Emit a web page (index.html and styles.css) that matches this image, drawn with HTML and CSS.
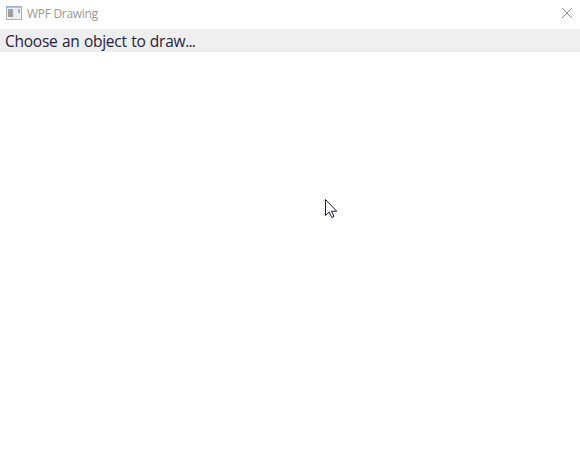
FILE: index.html
```html
<!DOCTYPE html>
<html lang="en">
<head>
<meta charset="utf-8">
<title>WPF Drawing</title>
<link rel="stylesheet" href="styles.css">
</head>
<body>
<div class="window">
  <header class="titlebar">
    <svg class="app-icon" width="16" height="14" viewBox="0 0 16 14" shape-rendering="crispEdges">
      <rect width="16" height="14" fill="#a4b1c6"/>
      <rect x="1" y="1" width="14" height="1" fill="#b9c2d0"/>
      <rect x="1" y="2" width="14" height="11" fill="#f1efec"/>
      <rect x="2" y="3" width="5" height="8" fill="#8fabc8"/>
      <rect x="2" y="5" width="4" height="6" fill="#b39a7c"/>
      <rect x="7" y="3" width="1" height="8" fill="#dce4ea"/>
      <rect x="12" y="3" width="2" height="4" fill="#94add0"/>
    </svg>
    <span class="title">WPF Drawing</span>
    <svg class="close" width="12" height="12" viewBox="0 0 12 12">
      <path d="M1 1L11 11M11 1L1 11" stroke="#92898a" stroke-width="1" fill="none"/>
    </svg>
  </header>
  <div class="menubar"><span class="prompt">Choose an object to draw<span class="dots">...</span></span></div>
  <main class="canvas">
    <svg class="cursor" width="14" height="21" viewBox="0 0 14 21">
      <path d="M1.5 1.5V17.5L5.2 14L7.8 19.5L10 18.5L7.6 13.2H12.7Z" fill="#fff" stroke="#211b35" stroke-width="1"/>
    </svg>
  </main>
</div>
</body>
</html>
```
FILE: styles.css
```css
* {
  box-sizing: border-box;
}

body {
  margin: 0;
  background: #fefefe;
  font-family: "Open Sans", "Noto Sans", sans-serif;
}

.window {
  display: flex;
  flex-direction: column;
  height: 470px;
  overflow: hidden;
}

.titlebar {
  display: flex;
  align-items: center;
  height: 29px;
  padding: 0 7px 3px 6px;
}

.app-icon {
  margin-right: 5px;
}

.title {
  color: #9c9993;
  font-size: 12px;
  line-height: 16px;
  letter-spacing: -0.3px;
  padding-top: 1px;
}

.close {
  margin-left: auto;
}

.menubar {
  height: 23px;
  padding-left: 5px;
  background: #eee;
  color: #28233b;
  font-size: 15.5px;
  line-height: 24px;
  letter-spacing: -0.25px;
  word-spacing: 0.6px;
  white-space: nowrap;
}

.dots {
  letter-spacing: -0.9px;
}

.canvas {
  position: relative;
  flex: 1;
}

.cursor {
  position: absolute;
  left: 324px;
  top: 146px;
}
```
